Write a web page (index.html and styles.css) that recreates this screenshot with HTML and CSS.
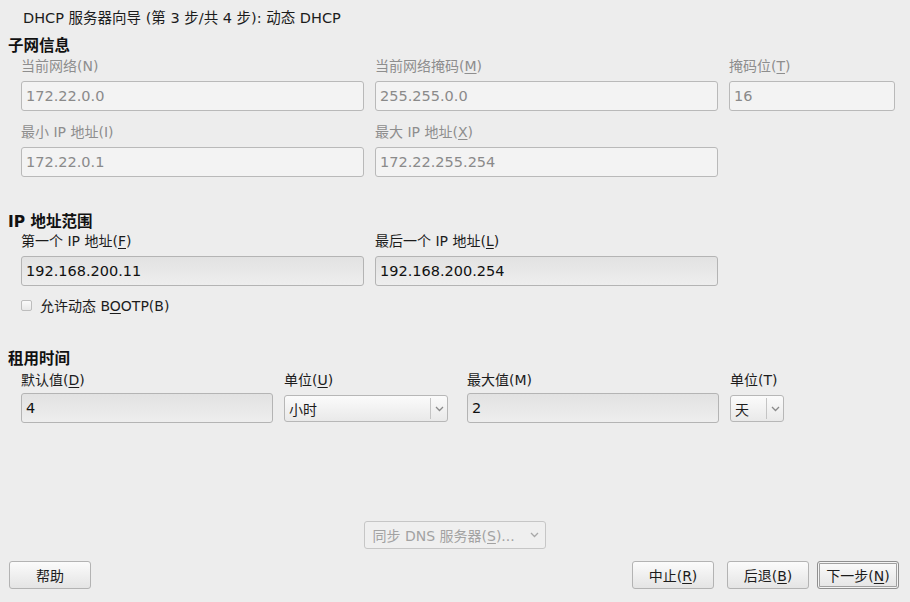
FILE: index.html
```html
<!DOCTYPE html>
<html lang="zh-CN">
<head>
<meta charset="utf-8">
<title>DHCP 服务器向导</title>
<link rel="stylesheet" href="styles.css">
</head>
<body>
<div class="dialog">
  <div class="title">DHCP 服务器向导 (第 3 步/共 4 步): 动态 DHCP</div>

  <div class="heading h1">子网信息</div>
  <div class="grid subnet">
    <div class="field disabled">
      <div class="label">当前网络(N)</div>
      <div class="input">172.22.0.0</div>
    </div>
    <div class="field disabled">
      <div class="label">当前网络掩码(<u>M</u>)</div>
      <div class="input">255.255.0.0</div>
    </div>
    <div class="field disabled">
      <div class="label">掩码位(<u>T</u>)</div>
      <div class="input">16</div>
    </div>
    <div class="field disabled">
      <div class="label">最小 IP 地址(I)</div>
      <div class="input">172.22.0.1</div>
    </div>
    <div class="field disabled">
      <div class="label">最大 IP 地址(<u>X</u>)</div>
      <div class="input">172.22.255.254</div>
    </div>
  </div>

  <div class="heading h2">IP 地址范围</div>
  <div class="grid range">
    <div class="field">
      <div class="label">第一个 IP 地址(<u>F</u>)</div>
      <div class="input active">192.168.200.11</div>
    </div>
    <div class="field">
      <div class="label">最后一个 IP 地址(<u>L</u>)</div>
      <div class="input active">192.168.200.254</div>
    </div>
  </div>
  <div class="check-row">
    <span class="checkbox"></span>
    <span class="check-label">允许动态 B<u>O</u>OTP(B)</span>
  </div>

  <div class="heading h3">租用时间</div>
  <div class="lease">
    <div class="field f-default">
      <div class="label">默认值(<u>D</u>)</div>
      <div class="input active">4</div>
    </div>
    <div class="field f-unit1">
      <div class="label">单位(<u>U</u>)</div>
      <div class="combo"><span class="combo-text">小时</span><span class="combo-btn"><svg width="9" height="6" viewBox="0 0 9 6"><path d="M1 1 L4.5 4.5 L8 1" fill="none" stroke="#8a8a8a" stroke-width="1.3"/></svg></span></div>
    </div>
    <div class="field f-max">
      <div class="label">最大值(M)</div>
      <div class="input active">2</div>
    </div>
    <div class="field f-unit2">
      <div class="label">单位(T)</div>
      <div class="combo"><span class="combo-text">天</span><span class="combo-btn"><svg width="9" height="6" viewBox="0 0 9 6"><path d="M1 1 L4.5 4.5 L8 1" fill="none" stroke="#8a8a8a" stroke-width="1.3"/></svg></span></div>
    </div>
  </div>

  <div class="spacer"></div>

  <div class="dns-row">
    <div class="dns-combo"><span>同步 DNS 服务器(<u>S</u>)...</span><svg width="9" height="6" viewBox="0 0 9 6"><path d="M1 1 L4.5 4.5 L8 1" fill="none" stroke="#a8a8a8" stroke-width="1.3"/></svg></div>
  </div>

  <div class="buttons">
    <button class="btn">帮助</button>
    <div class="btn-group">
      <button class="btn">中止(<u>R</u>)</button>
      <button class="btn">后退(<u>B</u>)</button>
      <button class="btn focus">下一步(<u>N</u>)</button>
    </div>
  </div>
</div>
</body>
</html>
```

FILE: styles.css
```css
html, body {
  margin: 0;
  padding: 0;
}
body {
  background: #ededed;
  font-family: "DejaVu Sans", "Noto Sans CJK SC", sans-serif;
  font-size: 14px;
  color: #1c1c1c;
}
u {
  text-decoration: underline;
  text-underline-offset: 2px;
}
.dialog {
  width: 910px;
  height: 602px;
  display: flex;
  flex-direction: column;
  box-sizing: border-box;
  padding-bottom: 13px;
}
.title {
  margin-top: 9px;
  height: 18px;
  line-height: 18px;
  padding-left: 23px;
  font-size: 14.5px;
  color: #1c1c1c;
  white-space: nowrap;
}
.heading {
  padding-left: 8px;
  height: 18px;
  line-height: 18px;
  font-weight: bold;
  font-size: 15.5px;
  color: #111;
  white-space: nowrap;
}
.h1 { margin-top: 10px; }
.h2 { margin-top: 36px; }
.h3 { margin-top: 36px; }

.grid {
  display: grid;
  padding-left: 21px;
  column-gap: 11px;
  row-gap: 11px;
}
.subnet {
  margin-top: 1px;
  grid-template-columns: 343px 343px 166px;
}
.range {
  margin-top: 0;
  grid-template-columns: 343px 343px;
}
.field {
  display: flex;
  flex-direction: column;
  gap: 5px;
}
.label {
  height: 20px;
  line-height: 20px;
  font-size: 14px;
  white-space: nowrap;
}
.disabled .label {
  color: #8e8e8e;
}
.input {
  height: 30px;
  box-sizing: border-box;
  border: 1px solid #b9b9b9;
  border-radius: 3px;
  background: #f3f3f3;
  color: #8a8a8a;
  font-size: 14.5px;
  line-height: 28px;
  padding-left: 4px;
  white-space: nowrap;
}
.input.active {
  color: #111;
  background: linear-gradient(to bottom, #e2e2e2 0%, #e9e9e9 60%, #eeeeee 100%);
  border-color: #b4b4b4;
}

.check-row {
  display: flex;
  align-items: center;
  height: 18px;
  margin-top: 10px;
  padding-left: 21px;
  gap: 8px;
}
.checkbox {
  width: 9px;
  height: 9px;
  border: 1px solid #bdbdbd;
  border-radius: 2px;
  background: linear-gradient(to bottom, #fafafa, #e8e8e8);
}
.check-label {
  font-size: 14px;
}

.lease {
  display: flex;
  padding-left: 21px;
  margin-top: 2px;
}
.lease .field { gap: 3px; }
.f-default { width: 252px; }
.f-unit1 { width: 164px; margin-left: 11px; }
.f-max { width: 252px; margin-left: 19px; }
.f-unit2 { width: 54px; margin-left: 11px; }

.combo {
  height: 27px;
  margin-top: 2px;
  box-sizing: border-box;
  border: 1px solid #b7b7b7;
  border-radius: 3px;
  background: linear-gradient(to bottom, #fbfbfb, #e9e9e9);
  display: flex;
  align-items: center;
}
.combo-text {
  flex: 1;
  padding-left: 4px;
  font-size: 14px;
  white-space: nowrap;
}
.combo-btn {
  width: 16px;
  height: 21px;
  border-left: 1px solid #c4c4c4;
  display: flex;
  align-items: center;
  justify-content: center;
}

.spacer { flex: 1; }

.dns-row {
  display: flex;
  justify-content: center;
  padding-right: 1px;
}
.dns-combo {
  width: 182px;
  height: 28px;
  box-sizing: border-box;
  border: 1px solid #c6c6c6;
  border-radius: 3px;
  background: #efefef;
  display: flex;
  align-items: center;
  justify-content: space-between;
  padding: 0 6px 0 8px;
  color: #a2a2a2;
  font-size: 14px;
  white-space: nowrap;
}

.buttons {
  margin-top: 12px;
  display: flex;
  justify-content: space-between;
  padding: 0 11px 0 9px;
}
.btn-group {
  display: flex;
  gap: 13px;
}
.btn {
  width: 82px;
  height: 28px;
  box-sizing: border-box;
  border: 1px solid #b3b3b3;
  border-radius: 3px;
  background: linear-gradient(to bottom, #fbfbfb, #e4e4e4);
  font-family: "DejaVu Sans", "Noto Sans CJK SC", sans-serif;
  font-size: 14px;
  color: #1c1c1c;
  padding: 0;
  text-align: center;
}
.btn.focus {
  margin-left: -5px;
  border-color: #8f8f8f;
  box-shadow: inset 0 0 0 1px #f4f4f4, inset 0 0 0 2px #a0a0a0;
}
```
